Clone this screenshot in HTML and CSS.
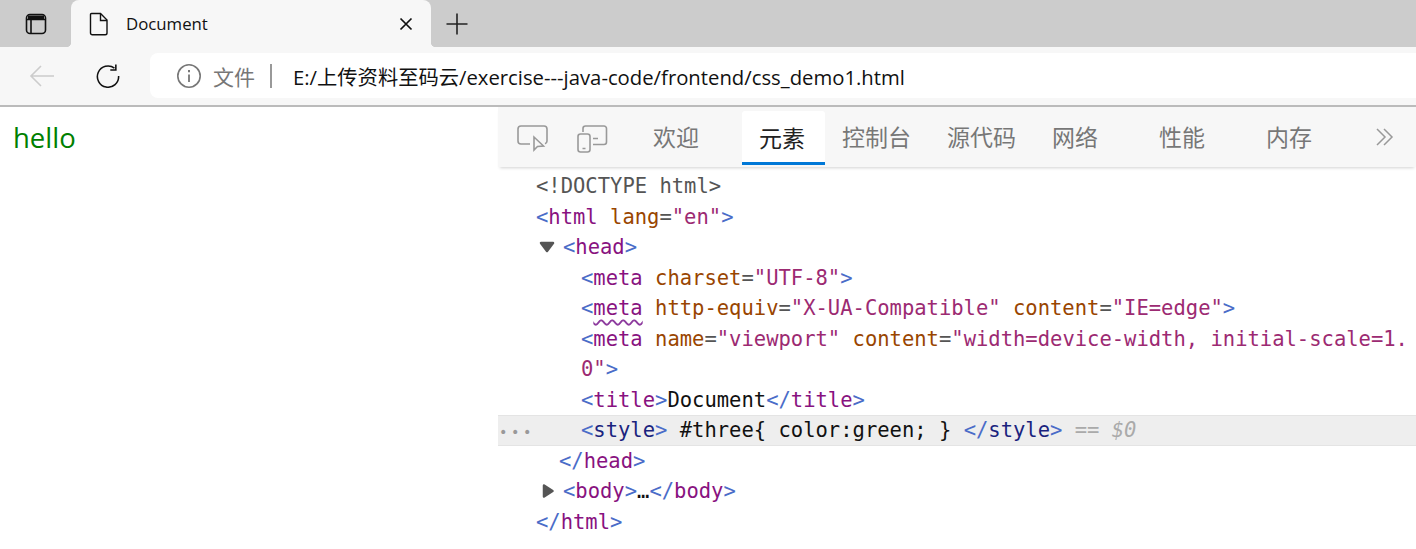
FILE: index.html
```html
<!DOCTYPE html>
<html lang="zh">
<head>
<meta charset="utf-8">
<title>Document</title>
<link rel="stylesheet" href="styles.css">
</head>
<body>
<header class="tabstrip">
  <div class="strip-btn">
    <svg width="24" height="24" viewBox="0 0 24 24" fill="none" stroke="#111" stroke-width="1.6"><rect x="2.5" y="2.5" width="19" height="19" rx="3.5"/><path d="M2.5 7.5h19M7 7.5v14" /><path d="M4 3.5h16v3.5H4z" fill="#111" stroke="none"/></svg>
  </div>
  <div class="tab">
    <svg class="tab-icon" width="20" height="24" viewBox="0 0 20 24" fill="none" stroke="#111" stroke-width="1.4"><path d="M2.500 1.500h9l6.500 6.500v13a1.800 1.800 0 0 1-1.800 1.800H3.300A1.800 1.800 0 0 1 1.500 21V2.500a1 1 0 0 1 1-1z"/><path d="M11.500 1.800v6.700h6.500"/></svg>
    <span class="tab-title">Document</span>
    <svg class="tab-close" width="14" height="14" viewBox="0 0 14 14" stroke="#111" stroke-width="1.700"><path d="M1.500 1.500l11 11M12.500 1.500l-11 11"/></svg>
  </div>
  <svg class="new-tab" width="22" height="22" viewBox="0 0 22 22" stroke="#222" stroke-width="1.600"><path d="M11 0.500v21M0.500 11h21"/></svg>
</header>
<nav class="toolbar">
  <svg class="nav-back" width="26" height="24" viewBox="0 0 26 24" fill="none" stroke="#ccc" stroke-width="1.600"><path d="M25 12H2M12 2L2 12l10 10"/></svg>
  <svg class="nav-reload" width="24" height="24" viewBox="0 0 26 26" fill="none" stroke="#111" stroke-width="1.700"><path d="M20 4.500A11.500 11.500 0 1 0 24.500 13"/><path d="M21.500 0.500V6.500H15.500"/></svg>
  <div class="omnibox">
    <svg class="info" width="26" height="26" viewBox="0 0 26 26" fill="none" stroke="#777" stroke-width="1.600"><circle cx="13" cy="13" r="11.200"/><path d="M13 11.500v7.500" stroke-width="1.800"/><path d="M13 7v2.200" stroke-width="2"/></svg>
    <span class="scheme">文件</span>
    <span class="divider"></span>
    <span class="url">E:/上传资料至码云/exercise---java-code/frontend/css_demo1.html</span>
  </div>
</nav>
<main class="content">
  <section class="page"><p class="hello">hello</p></section>
  <section class="devtools">
    <div class="dt-tabs">
      <svg class="dt-inspect" width="32" height="28" viewBox="0 0 32 28" fill="none" stroke="#999" stroke-width="1.600"><path d="M13 19H4a3 3 0 0 1-3-3V4a3 3 0 0 1 3-3h23a3 3 0 0 1 3 3v12a3 3 0 0 1-2 2.800"/><path d="M17 12v13l3.500-3.500 6-.5z"/></svg>
      <svg class="dt-device" width="32" height="28" viewBox="0 0 32 28" fill="none" stroke="#999" stroke-width="1.600"><path d="M6 7V3.500A2.500 2.500 0 0 1 8.500 1H27a2.500 2.500 0 0 1 2.500 2.500V17a2.500 2.500 0 0 1-2.500 2.500H16"/><rect x="1" y="9" width="12" height="18" rx="2.500"/><path d="M5.500 23.500h3M16 13.500h5"/></svg>
      <span class="dt-tab">欢迎</span>
      <span class="dt-tab dt-active">元素</span>
      <span class="dt-tab dt-tab-console">控制台</span>
      <span class="dt-tab dt-tab-sources">源代码</span>
      <span class="dt-tab dt-tab-network">网络</span>
      <span class="dt-tab dt-tab-perf">性能</span>
      <span class="dt-tab dt-tab-memory">内存</span>
      <svg class="dt-more" width="18" height="18" viewBox="0 0 18 18" fill="none" stroke="#999" stroke-width="1.500"><path d="M1 1l8 8-8 8M8 1l8 8-8 8"/></svg>
    </div>
    <div class="dom">
      <div class="row i0 doctype">&lt;!DOCTYPE html&gt;</div>
      <div class="row i0"><b class="p">&lt;</b><b class="t">html</b> <b class="a">lang</b><b class="e">=</b><b class="v">"en"</b><b class="p">&gt;</b></div>
      <div class="row i1"><svg class="arrow" width="16" height="12" viewBox="0 0 16 12"><path class="arrow-shape" d="M2 2h12L8 10z"/></svg><b class="p">&lt;</b><b class="t">head</b><b class="p">&gt;</b></div>
      <div class="row i2"><b class="p">&lt;</b><b class="t">meta</b> <b class="a">charset</b><b class="e">=</b><b class="v">"UTF-8"</b><b class="p">&gt;</b></div>
      <div class="row i2"><b class="p">&lt;</b><b class="t wavy">meta</b> <b class="a">http-equiv</b><b class="e">=</b><b class="v">"X-UA-Compatible"</b> <b class="a">content</b><b class="e">=</b><b class="v">"IE=edge"</b><b class="p">&gt;</b></div>
      <div class="row i2"><b class="p">&lt;</b><b class="t">meta</b> <b class="a">name</b><b class="e">=</b><b class="v">"viewport"</b> <b class="a">content</b><b class="e">=</b><b class="v">"width=device-width, initial-scale=1.0"</b><b class="p">&gt;</b></div>
      <div class="row i2"><b class="p">&lt;</b><b class="t">title</b><b class="p">&gt;</b>Document<b class="p">&lt;/</b><b class="t">title</b><b class="p">&gt;</b></div>
      <div class="row i2 selected"><span class="dots">•••</span><b class="p">&lt;</b><b class="t-sel">style</b><b class="p">&gt;</b> #three{ color:green; } <b class="p">&lt;/</b><b class="t-sel">style</b><b class="p">&gt;</b> <i class="dollar">== $0</i></div>
      <div class="row i1b"><b class="p">&lt;/</b><b class="t">head</b><b class="p">&gt;</b></div>
      <div class="row i1"><svg class="arrow arrow-side" width="16" height="16" viewBox="0 0 16 16"><path class="arrow-shape" d="M4 2.500l8.500 5.500-8.500 5.500z"/></svg><b class="p">&lt;</b><b class="t">body</b><b class="p">&gt;</b>…<b class="p">&lt;/</b><b class="t">body</b><b class="p">&gt;</b></div>
      <div class="row i0"><b class="p">&lt;/</b><b class="t">html</b><b class="p">&gt;</b></div>
    </div>
  </section>
</main>
</body>
</html>
```
FILE: styles.css
```css
* { box-sizing: border-box; }
html, body { margin: 0; height: 100%; overflow: hidden; background: #fff; }
body { font-family: "Open Sans", "Noto Sans CJK SC", sans-serif; color: #111; }
svg { display: block; flex: none; }

.tabstrip { height: 47px; background: #ccc; display: flex; align-items: flex-start; }
.strip-btn { width: 71px; height: 47px; display: flex; align-items: center; justify-content: center; padding-left: 1px; }
.tab { position: relative; width: 360px; height: 47px; background: #f7f7f7; border-radius: 8px 8px 0 0; display: flex; align-items: center; padding: 0 18px 0 18px; }
.tab::before, .tab::after { content: ""; position: absolute; bottom: 0; width: 5px; height: 5px; }
.tab::before { left: -5px; background: radial-gradient(circle at 0 0, #ccc 5px, #f7f7f7 5.500px); }
.tab::after { right: -5px; background: radial-gradient(circle at 100% 0, #ccc 5px, #f7f7f7 5.500px); }
.tab-icon { margin-top: 1px; }
.tab-title { font-size: 16.800px; margin-left: 17px; flex: 1; }
.new-tab { margin: 13px 0 0 15px; }

.toolbar { height: 58px; background: #f7f7f7; display: flex; align-items: center; padding-left: 29px; }
.nav-reload { margin-left: 41px; margin-top: -1px; }
.omnibox { margin-left: 30px; margin-top: -1px; flex: 1; height: 45px; background: #fff; border-radius: 8px 0 0 8px; display: flex; align-items: center; padding-left: 26px; }
.scheme { font-size: 21px; color: #777; margin-left: 11px; }
.divider { width: 2px; height: 24px; background: #999; margin: 0 21px 0 15px; }
.url { font-size: 20.300px; color: #111; white-space: nowrap; }

.content { border-top: 2px solid #bbb; display: flex; height: 444px; }
.page { width: 498px; flex: none; padding: 14px; }
.hello { margin: 0 0 0 -1px; color: #008000; font-size: 27.500px; line-height: 34px; }

.devtools { flex: 1; min-width: 0; }
.dt-tabs { height: 60px; background: #f7f7f7; display: flex; align-items: center; box-shadow: 0 3px 3px -2px rgba(0,0,0,.18); position: relative; }
.dt-inspect { margin-left: 19px; margin-top: 4px; }
.dt-device { margin-left: 28px; margin-top: 4px; }
.dt-tab { font-size: 23px; color: #777; padding: 0 17px 2px; height: 58px; display: flex; align-items: center; white-space: nowrap; }
.dt-tab:nth-of-type(1) { margin-left: 27px; }
.dt-active { color: #222; background: #fff; margin-left: 26px; padding: 0 20px 0 17px; border-bottom: 3px solid #0078d7; border-radius: 3px 3px 0 0; height: 54px; margin-top: 2px; }
.dt-tab-sources { margin-left: 2px; }
.dt-tab-network { margin-left: 2px; }
.dt-tab-perf { margin-left: 27px; }
.dt-tab-memory { margin-left: 27px; }
.dt-more { margin-left: 47px; margin-top: -1px; }

.dom { padding-top: 4px; font-family: "DejaVu Sans Mono", monospace; font-size: 20.500px; line-height: 30.550px; color: #111; }
.row { position: relative; word-break: break-all; white-space: pre-wrap; }
.row b { font-weight: 400; }
.i0 { padding-left: 38px; }
.i1 { padding-left: 65px; }
.i1b { padding-left: 61px; }
.i2 { padding-left: 83px; }
.doctype { color: #555; }
.p { color: #4a6cc8; }
.t { color: #881280; }
.t-sel { color: #1a237e; }
.a { color: #994500; }
.e { color: #555; }
.v { color: #9c2a72; }
.wavy { text-decoration: underline wavy #8d3b9e 1.500px; text-underline-offset: 4px; }
.arrow { position: absolute; left: 41px; top: 9px; }
.arrow-side { left: 42px; top: 7px; }
.arrow-shape { fill: #555; stroke: #555; stroke-width: 2.500; stroke-linejoin: round; }
.selected { background: #eee; box-shadow: inset 0 1px 0 #e4e4e4, inset 0 -1px 0 #e4e4e4; }
.dots { position: absolute; left: 0; top: 2px; color: #999; font-size: 14px; letter-spacing: 3.600px; padding-left: 1px; }
.dollar { color: #aaa; }
```
